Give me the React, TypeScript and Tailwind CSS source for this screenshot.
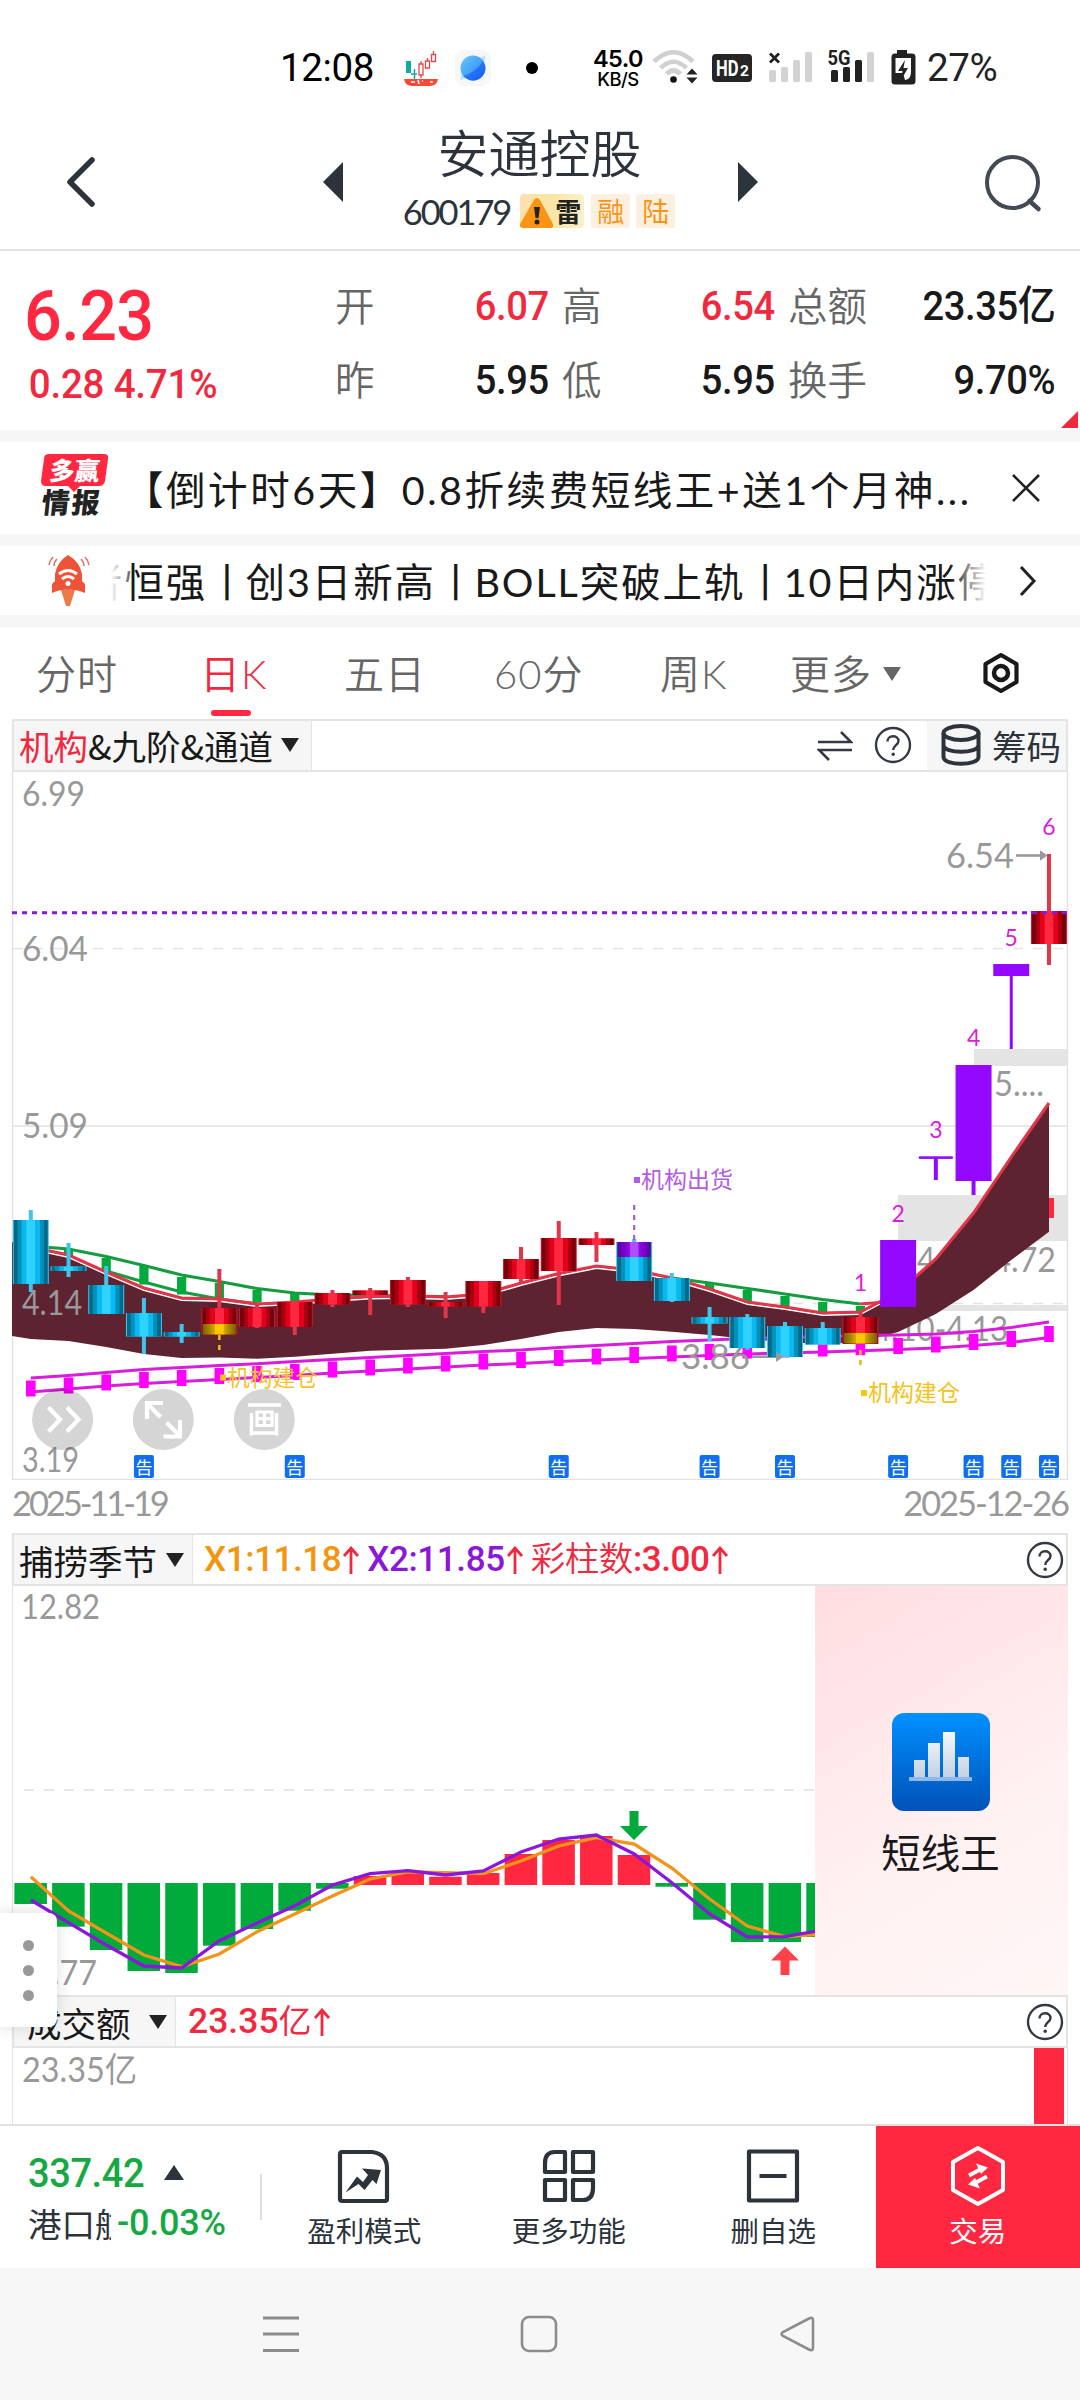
import React from "react";

const STEP = 37.71;
const cx = (i: number) => 30.8 + i * STEP;

const num = "font-['Roboto','Noto_Sans_CJK_SC',sans-serif]";
const light = "Lato, 'Noto Sans CJK SC', sans-serif";

type Candle = { i: number; k: "b" | "r"; h: number; t: number; b: number; l: number };

const candles: Candle[] = [
  { i: 0, k: "b", h: 1210, t: 1220, b: 1284, l: 1292 },
  { i: 1, k: "b", h: 1243, t: 1266.5, b: 1271, l: 1277 },
  { i: 2, k: "b", h: 1266, t: 1285, b: 1314, l: 1314 },
  { i: 3, k: "b", h: 1298, t: 1313, b: 1336.5, l: 1354 },
  { i: 4, k: "b", h: 1324, t: 1332, b: 1336.5, l: 1343 },
  { i: 5, k: "r", h: 1269, t: 1308, b: 1334.5, l: 1334 },
  { i: 6, k: "r", h: 1304, t: 1308, b: 1327, l: 1328 },
  { i: 7, k: "r", h: 1302, t: 1302, b: 1327, l: 1335 },
  { i: 8, k: "r", h: 1290, t: 1293, b: 1304.5, l: 1307 },
  { i: 9, k: "r", h: 1288, t: 1290.5, b: 1295, l: 1315 },
  { i: 10, k: "r", h: 1277, t: 1280, b: 1304.5, l: 1307 },
  { i: 11, k: "r", h: 1292, t: 1302, b: 1306.5, l: 1318 },
  { i: 12, k: "r", h: 1281, t: 1281, b: 1306.5, l: 1313 },
  { i: 13, k: "r", h: 1247, t: 1259, b: 1279, l: 1283 },
  { i: 14, k: "r", h: 1221, t: 1238, b: 1271, l: 1305 },
  { i: 15, k: "r", h: 1232, t: 1238.5, b: 1245, l: 1262 },
  { i: 16, k: "b", h: 1239, t: 1242, b: 1281, l: 1281 },
  { i: 17, k: "b", h: 1273, t: 1278, b: 1301, l: 1302 },
  { i: 18, k: "b", h: 1307, t: 1317, b: 1323.5, l: 1341 },
  { i: 19, k: "b", h: 1314, t: 1317, b: 1348, l: 1350 },
  { i: 20, k: "b", h: 1322, t: 1326, b: 1357, l: 1357 },
  { i: 21, k: "b", h: 1322, t: 1328, b: 1344.5, l: 1345 },
  { i: 22, k: "r", h: 1312, t: 1317, b: 1344, l: 1344 },
  { i: 27, k: "r", h: 854, t: 911, b: 944, l: 965 },
];

const bandTop = [
  1247, 1255, 1272, 1288, 1298, 1299, 1304, 1302, 1299, 1296.5, 1296, 1297, 1294, 1283, 1273.5, 1266,
  1270, 1278, 1289, 1302, 1307, 1313, 1312, 1292, 1259, 1213, 1157, 1103,
];
const bandBottom = [
  1339, 1341, 1347, 1354, 1358, 1357.5, 1358.7, 1356.7, 1353.7, 1350.7, 1349.7, 1348.7, 1345, 1339, 1332,
  1328, 1329, 1331.7, 1335, 1339, 1342, 1344, 1342, 1332, 1314, 1290, 1260, 1231.7,
];
const greenTop = [1246, 1249, 1256.5, 1265.5, 1275, 1281.5, 1288.5, 1293, 1295, 1295.5, 1296, 1296.5];
const greenTop2 = [1278, 1283, 1288.5, 1294, 1299.5, 1304];
const magTop = [
  1378, 1375.5, 1372.5, 1369.5, 1367.5, 1365.5, 1363.7, 1361.5, 1359.5, 1357.5, 1355.5, 1353.5, 1351.5, 1350,
  1347.5, 1345.5, 1343.5, 1341.5, 1340, 1338.5, 1337.5, 1336.5, 1335.5, 1335, 1334, 1331.5, 1327.5, 1322,
];
const magBottom = [
  1392, 1389, 1386, 1383.5, 1381.5, 1379.5, 1377.5, 1375.5, 1373, 1371, 1369, 1367, 1365, 1363.5, 1361.5,
  1360, 1358.5, 1357, 1355.5, 1354, 1353, 1352, 1350.7, 1349.5, 1348, 1345.5, 1342.5, 1337.5,
];
const line = (ys: number[], from = 0, dy = 0) =>
  ys.map((y, n) => `${cx(n + from).toFixed(1)},${y + dy}`).join(" ");

const greenRungs: [number, number, number][] = [
  [1, 1250, 1256], [2, 1258, 1272], [3, 1266, 1284.5], [4, 1277, 1294.5], [5, 1283, 1300], [6, 1290, 1302.5],
  [7, 1294, 1302], [18, 1284, 1290], [19, 1290, 1302], [20, 1296, 1306], [21, 1302, 1312], [22, 1306, 1313],
];

function Label({ x, y, w, children, size = 34.5, color = "#999", weight = 400 }: {
  x: number; y: number; w: number; children: string; size?: number; color?: string; weight?: number;
}) {
  return (
    <text x={x} y={y} textLength={w} lengthAdjust="spacingAndGlyphs" fontFamily={light} fontSize={size} fontWeight={weight} fill={color}>
      {children}
    </text>
  );
}

function MainChart() {
  const notices = [3, 7, 14, 18, 20, 23, 25, 26, 27];
  return (
    <svg width="1080" height="708" viewBox="0 772 1080 708" className="block">
      <defs>
        <linearGradient id="blue">
          <stop offset="0" stopColor="#006a8c" /><stop offset=".1" stopColor="#006a8c" />
          <stop offset=".12" stopColor="#0090b8" /><stop offset=".22" stopColor="#0090b8" />
          <stop offset=".24" stopColor="#08b8ee" /><stop offset=".36" stopColor="#08b8ee" />
          <stop offset=".38" stopColor="#2fd2ff" /><stop offset=".62" stopColor="#2fd2ff" />
          <stop offset=".64" stopColor="#08b8ee" /><stop offset=".76" stopColor="#08b8ee" />
          <stop offset=".78" stopColor="#0090b8" /><stop offset=".88" stopColor="#0090b8" />
          <stop offset=".9" stopColor="#006a8c" /><stop offset="1" stopColor="#006a8c" />
        </linearGradient>
        <linearGradient id="red">
          <stop offset="0" stopColor="#780009" /><stop offset=".1" stopColor="#780009" />
          <stop offset=".12" stopColor="#a80010" /><stop offset=".22" stopColor="#a80010" />
          <stop offset=".24" stopColor="#e3001b" /><stop offset=".36" stopColor="#e3001b" />
          <stop offset=".38" stopColor="#ff2840" /><stop offset=".62" stopColor="#ff2840" />
          <stop offset=".64" stopColor="#e3001b" /><stop offset=".76" stopColor="#e3001b" />
          <stop offset=".78" stopColor="#a80010" /><stop offset=".88" stopColor="#a80010" />
          <stop offset=".9" stopColor="#780009" /><stop offset="1" stopColor="#780009" />
        </linearGradient>
        <linearGradient id="gold">
          <stop offset="0" stopColor="#7d6300" /><stop offset=".2" stopColor="#a88500" />
          <stop offset=".36" stopColor="#d9aa00" /><stop offset=".38" stopColor="#ffc800" />
          <stop offset=".62" stopColor="#ffc800" /><stop offset=".64" stopColor="#d9aa00" />
          <stop offset=".8" stopColor="#a88500" /><stop offset="1" stopColor="#7d6300" />
        </linearGradient>
        <linearGradient id="violet">
          <stop offset="0" stopColor="#5a009c" /><stop offset=".2" stopColor="#7a00cc" />
          <stop offset=".36" stopColor="#8d10e0" /><stop offset=".38" stopColor="#b24dff" />
          <stop offset=".62" stopColor="#b24dff" /><stop offset=".64" stopColor="#8d10e0" />
          <stop offset=".8" stopColor="#7a00cc" /><stop offset="1" stopColor="#5a009c" />
        </linearGradient>
      </defs>

      <path d="M12.5 772V1479.5H1067.5V772" fill="none" stroke="#e2e2e2" strokeWidth="1.5" />
      <path d="M13 948.5H1067M13 1303.5H1067" stroke="#e3e3e3" strokeWidth="1.5" strokeDasharray="10 10" />
      <path d="M13 1126H1067" stroke="#e8e8e8" strokeWidth="2" />
      <rect x="974" y="1049" width="93" height="17" fill="#e4e4e4" />
      <rect x="898" y="1195" width="169" height="46" fill="#e4e4e4" />
      <rect x="898" y="1305" width="169" height="6" fill="#e4e4e4" />
      <Label x={994} y={1096} w={50}>5....</Label>
      <Label x={917} y={1272} w={139}>4.59-4.72</Label>
      <Label x={873} y={1341} w={135}>4.10-4.13</Label>
      <rect x="1044" y="1198" width="10" height="20" fill="#ff2840" />

      {/* channel band */}
      <polygon
        points={`12,1242 ${line(bandTop)} ${bandBottom.map((y, n) => `${cx(n).toFixed(1)},${y}`).reverse().join(" ")} 12,1336`}
        fill="#5e2331"
      />
      <polyline points={line(greenTop)} fill="none" stroke="#169b41" strokeWidth="3.2" />
      <polyline points={line(greenTop2, 17)} fill="none" stroke="#169b41" strokeWidth="3.2" />
      <polyline points={line([1271, 1282, 1292, 1299, 1304], 2)} fill="none" stroke="#169b41" strokeWidth="3" />
      {greenRungs.map(([i, a, b]) => (
        <rect key={i} x={cx(i) - 4.6} y={a} width="9.2" height={b - a} fill="#00aa3b" />
      ))}
      <polyline points={line(bandTop.slice(0, 24), 0, 2.2)} fill="none" stroke="#fff" strokeWidth="1.8" />
      <polyline points={line(bandTop)} fill="none" stroke="#e0354a" strokeWidth="3.1" />
      <polyline points={line([1304, 1301], 22)} fill="none" stroke="#e0354a" strokeWidth="2.8" />

      {/* magenta ladder */}
      <polyline points={line(magTop)} fill="none" stroke="#d81edb" strokeWidth="3" />
      <polyline points={line(magBottom)} fill="none" stroke="#d81edb" strokeWidth="3" />
      {magBottom.map((y, n) => (
        <rect key={n} x={cx(n) - 4.8} y={y - 11.5} width="9.6" height="16" fill="#ff00ff" />
      ))}

      <Label x={22} y={806} w={63}>6.99</Label>
      <Label x={22} y={961} w={66}>6.04</Label>
      <Label x={22} y={1138} w={66}>5.09</Label>
      <Label x={22} y={1315} w={60}>4.14</Label>
      <Label x={22} y={1472} w={57}>3.19</Label>
      <Label x={681} y={1369} w={69}>3.86</Label>
      <path d="M752 1356.7h25" stroke="#999" strokeWidth="2.6" />

      {candles.map((c) => (
        <g key={c.i}>
          <rect x={cx(c.i) - 2} y={c.h} width="4" height={c.l - c.h} fill={c.k === "b" ? "#3fc4ee" : "#e0354a"} />
          <rect x={cx(c.i) - 18} y={c.t} width="36" height={c.b - c.t} fill={c.k === "b" ? "#3fc4ee" : "#c81b30"} />
          <rect x={cx(c.i) - 17} y={c.t} width="34" height={c.b - c.t} fill={c.k === "b" ? "url(#blue)" : "url(#red)"} />
        </g>
      ))}
      <path d="M776 1351.500l7.500 5.200l-7.500 5.200z" fill="#999" />
      <Label x={946} y={868} w={68}>6.54</Label>
      <path d="M1016 855.5h25" stroke="#999" strokeWidth="2.6" />
      <path d="M1040 850.300l7.500 5.200l-7.500 5.200z" fill="#999" />
      <rect x={cx(5) - 16.5} y="1324" width="33" height="10.5" fill="url(#gold)" />
      <rect x={cx(22) - 16.5} y="1333" width="33" height="10.5" fill="url(#gold)" />
      <rect x={cx(16) - 16.5} y="1242" width="33" height="15" fill="url(#violet)" />
      <path d={`M${cx(5)} 1335v16`} stroke="#e8b820" strokeWidth="2.6" strokeDasharray="5 5" />
      <path d={`M${cx(22)} 1350v17`} stroke="#e8b820" strokeWidth="2.6" strokeDasharray="5 5" />
      <path d={`M${cx(16)} 1205v35`} stroke="#a75bd6" strokeWidth="2.2" strokeDasharray="5 5" />

      <g fill="#9408ff">
        <rect x={cx(23) - 18} y="1240" width="36" height="67" />
        <rect x={cx(24) - 17} y="1156.3" width="34" height="2.6" />
        <rect x={cx(24) - 2} y="1158" width="4" height="22" />
        <rect x={cx(25) - 18} y="1065" width="36" height="116" />
        <rect x={cx(25) - 2} y="1181" width="4" height="14" />
        <rect x={cx(26) - 18} y="964" width="36" height="12" />
        <rect x={cx(26) - 1.5} y="976" width="3" height="73" />
      </g>
      <path d="M12 912.7H1067" stroke="#8a17d9" strokeWidth="3" strokeDasharray="5 5" />

      {[[22, 1291, "1"], [23, 1222, "2"], [24, 1138, "3"], [25, 1046, "4"], [26, 946, "5"], [27, 835, "6"]].map(([i, y, s]) => (
        <text key={s} x={cx(i as number)} y={y} textAnchor="middle" fontFamily={light} fontSize="23" fill="#d61fdb">{s}</text>
      ))}

      <rect x="634" y="1177" width="6" height="6" fill="#b25be3" />
      <Label x={641} y={1188} w={92} size={23} color="#b25be3">机构出货</Label>
      <rect x="220" y="1374.500" width="6" height="6" fill="#fbc50c" />
      <Label x={227} y={1385.5} w={91} size={23} color="#f3c32a">机构建仓</Label>
      <rect x="861" y="1390" width="6" height="6" fill="#fbc50c" />
      <Label x={868} y={1401} w={92} size={23} color="#f5c21a">机构建仓</Label>

      {[62.6, 163.3, 264.3].map((x) => (
        <circle key={x} cx={x} cy="1419.500" r="30.500" fill="#000" fillOpacity=".165" />
      ))}
      <g fill="none" stroke="#fff" strokeWidth="4.200">
        <path d="M48.500 1407.500l11.500 12l-11.500 12M67 1407.500l11.500 12l-11.500 12" />
        <path d="M147 1419v-16h16M148 1404.500l12.500 12.500M180 1420v16.500h-16.500M179 1435l-12.500-12.500" />
        <path d="M248 1405h33M251.500 1413v22.500M276.500 1413v22.500M251 1433h26" strokeWidth="3.600" />
        <path d="M257 1412h15v13.500h-15zM264.500 1412v13.500M257 1418.700h15" strokeWidth="3.200" />
      </g>

      {notices.map((i) => (
        <g key={i}>
          <rect x={cx(i) - 10} y="1455" width="20" height="23" rx="2" fill="#0f6ff0" />
          <text x={cx(i)} y="1473.500" textAnchor="middle" fontFamily={light} fontSize="17" fill="#fff">告</text>
        </g>
      ))}
    </svg>
  );
}

const bars = [
  1904, 1926.7, 1950, 1971, 1973, 1945.7, 1929, 1910.7, 1888.7, 1876, 1873, 1876.7, 1873, 1854, 1840, 1836,
  1855, 1886.7, 1919.7, 1942, 1942, 1937,
];
const orange = [
  1876.7, 1911, 1933, 1955, 1966.7, 1954, 1931.7, 1914, 1896, 1879, 1872, 1872.7, 1873.7, 1861, 1846, 1837.7,
  1844, 1868, 1899, 1926, 1936.7, 1934,
];
const purple = [
  1900, 1922.7, 1945, 1966, 1968, 1940.7, 1923, 1905.7, 1885, 1873.7, 1870.7, 1875, 1871, 1852, 1839, 1835,
  1854, 1882.7, 1914, 1937, 1936.7, 1930,
];

function SeasonChart() {
  return (
    <svg width="802" height="409" viewBox="13 1586 802 409" className="block">
      <path d="M24 1790H815" stroke="#e6e6e6" strokeWidth="2" strokeDasharray="10 10" />
      <Label x={21} y={1619} w={79}>12.82</Label>
      <Label x={21} y={1985} w={76}>-4.77</Label>
      {bars.map((y, i) => {
        const up = i >= 9 && i <= 16;
        return (
          <rect key={i} x={cx(i) - 16.4} y={up ? y : 1883} width="32.500" height={up ? 1885 - y : y - 1883} fill={up ? "#ff2840" : "#00aa3b"} />
        );
      })}
      <polyline points={line(orange)} fill="none" stroke="#f0941a" strokeWidth="3.300" />
      <polyline points={line(purple)} fill="none" stroke="#8a17d9" strokeWidth="3.300" />
      <path d="M629.500 1811h9v15h9.500l-14 14l-14-14h9.500z" fill="#00aa3b" />
      <path d="M780.500 1975h9v-14.500h9.500l-14-14l-14 14h9.500z" fill="#ff4248" />
    </svg>
  );
}

const Down = ({ c = "text-[#222]" }: { c?: string }) => (
  <svg width="18" height="14" viewBox="0 0 18 14" className={c}><path d="M0 0h18L9 14z" fill="currentColor" /></svg>
);
const UpArrow = () => (
  <svg width="16" height="28" viewBox="0 0 16 28" className="ml-[2px]">
    <path d="M8 28V3M1 10l7-8l7 8" fill="none" stroke="#f0293f" strokeWidth="2.800" />
  </svg>
);
const Help = () => (
  <svg width="38" height="38" viewBox="0 0 38 38">
    <circle cx="19" cy="19" r="17" fill="none" stroke="#333a45" strokeWidth="2.400" />
    <path d="M13.500 15.500c0-7 11-7 11-.5c0 4-5.300 4.500-5.300 9" fill="none" stroke="#333a45" strokeWidth="2.400" />
    <circle cx="19.200" cy="28.300" r="1.700" fill="#333a45" />
  </svg>
);

function StatusBar() {
  return (
    <div className="flex h-[115px] items-start pt-[44px] pl-[280px] text-black">
      <div className={`${num} w-[124px] text-[38.5px] leading-[48px] tracking-[-0.4px]`}>12:08</div>
      <svg width="34" height="36" viewBox="404 50 34 36" className="mt-[6px]">
        <path d="M406 61h5v12h-5z" fill="#15a9a6" /><path d="M414.500 69v11M411 74h6" stroke="#15a9a6" strokeWidth="1.500" />
        <g fill="none" stroke="#e24a4a" strokeWidth="1.300">
          <path d="M419 64h4v11h-4zM421 61v3M421 75v3M425.500 61h4v7h-4zM427.500 58v3M431.500 54.500h4v7h-4zM433.500 51v3" />
        </g>
        <path d="M404 79h34q-1 7-8 7h-18q-7 0-8-7z" fill="#fb4a34" />
        <path d="M411 82h4M418 80l1 4M422 81h1M430 82h3" stroke="#fff" strokeWidth="1.500" />
      </svg>
      <svg width="36" height="36" viewBox="0 0 36 36" className="mt-[6px] ml-[17px]">
        <defs>
          <linearGradient id="globe" x1="0" y1="0" x2="1" y2="1">
            <stop offset="0" stopColor="#69c8ff" /><stop offset=".5" stopColor="#46a4fa" /><stop offset="1" stopColor="#1457f2" />
          </linearGradient>
        </defs>
        <rect width="36" height="36" rx="9" fill="#f6f7f9" />
        <path d="M30 5.500L22 10l5 5q4-6 3-9.500zM5.500 30L14 27l-6-6q-3 6-2.500 9z" fill="#b5e4ff" />
        <circle cx="18" cy="18" r="12.500" fill="url(#globe)" />
        <path d="M8 26Q22 22 28 11q5 9-1 16q-9 8-19-1z" fill="#145cf2" opacity=".6" />
      </svg>
      <div className="mt-[18px] ml-[35px] h-[12px] w-[12px] rounded-full bg-black" />
      <div className="mt-[3px] ml-[52px] flex w-[56px] flex-col items-center font-['Inter'] font-semibold">
        <div className="text-[23.5px] leading-[23px] tracking-[-0.5px]">45.0</div>
        <div className="text-[18.5px] leading-[19px] font-medium tracking-[-0.5px]">KB/S</div>
      </div>
      <svg width="266" height="40" viewBox="650 48 266 40" className="mt-[4px] ml-[4px]">
        <g fill="none" stroke="#d0d0d0" strokeWidth="4.500">
          <path d="M654 61.500q19.500-18.500 39 0M660.500 68q13-12.500 26 0M666.500 74q7-7 14 0" />
        </g>
        <circle cx="673.500" cy="79.500" r="3.300" fill="#111" />
        <path d="M686.500 74.500l5.500-6l5.500 6zM686.500 77.500l5.500 6l5.500-6z" fill="#222" />
        <rect x="712" y="54" width="40" height="28" rx="4" fill="#252525" />
        <text x="716" y="76" fontFamily="Roboto" fontWeight="700" fontSize="22" textLength="22.500" lengthAdjust="spacingAndGlyphs" fill="#fff">HD</text>
        <text x="740" y="76" fontFamily="Roboto" fontWeight="700" fontSize="15.500" fill="#fff">2</text>
        <path d="M770 53.500l9 9M779 53.500l-9 9" stroke="#222" strokeWidth="2.800" />
        <g fill="#d3d3d3">
          <rect x="769" y="70" width="7" height="12" rx="1.500" /><rect x="781" y="67" width="7" height="15" rx="1.500" />
          <rect x="793" y="60" width="7" height="22" rx="1.500" /><rect x="805" y="52" width="7" height="30" rx="1.500" />
          <rect x="867" y="52" width="7" height="30" rx="1.500" />
        </g>
        <g fill="#222">
          <rect x="831" y="70" width="7" height="12" rx="1.500" /><rect x="843" y="67" width="7" height="15" rx="1.500" />
          <rect x="855" y="60" width="7" height="22" rx="1.500" />
        </g>
        <text x="827.500" y="65" fontFamily="Roboto" fontWeight="700" fontSize="20.500" textLength="23" lengthAdjust="spacingAndGlyphs" fill="#222">5G</text>
        <path d="M897 50h10v3.500h5q3.500 0 3.500 3.500v24q0 3.500-3.500 3.500h-17q-3.500 0-3.500-3.500v-24q0-3.500 3.500-3.500h2z" fill="#222" />
        <path d="M895.500 58h15.500v14q0 7-6 8l-2-7h-7.500z" fill="#fff" />
        <path d="M905 60l-7 11h4.500l-1.500 9l7-12h-4.500z" fill="#222" />
      </svg>
      <div className={`${num} ml-[11px] text-[38.5px] leading-[48px] tracking-[-0.4px] text-[#222]`}>27%</div>
    </div>
  );
}

function TitleBar() {
  return (
    <div className="flex h-[136px] items-start border-b-2 border-[#e4e4e4] text-[#2c333b]">
      <svg width="34" height="54" viewBox="0 0 34 54" className="mt-[40px] ml-[63px]">
        <path d="M29 5L7 27l22 22" fill="none" stroke="currentColor" strokeWidth="5.500" strokeLinecap="round" strokeLinejoin="round" />
      </svg>
      <svg width="20" height="40" viewBox="0 0 20 40" className="mt-[47px] ml-[226px]"><path d="M20 0v40L0 20z" fill="currentColor" /></svg>
      <div className="flex w-[395px] flex-col items-center">
        <div className="mt-[4px] -ml-[2px] font-['Noto_Sans_CJK_SC'] text-[51px] leading-[64px] font-[350]">安通控股</div>
        <div className="mt-[11px] flex h-[34px] items-center pr-[3px]">
          <span className="mr-[10px] pt-[2px] font-[Lato] text-[34.5px] leading-[34px] tracking-[-2.1px]">600179</span>
          <div className="mr-[7px] flex h-[34px] w-[64px] items-center rounded-[4px] bg-[linear-gradient(90deg,#ffe0b0,#f9e5a4_50%,#fdf0c8)] font-['Noto_Sans_CJK_SC'] text-[26px] font-bold text-[#222]">
            <svg width="36" height="34" viewBox="0 0 36 34">
              <path d="M0 30L14 6q3-4 6 0l13 24q1 4-3 4H3q-4 0-3-4z" fill="#fb9413" />
              <path d="M14 13h6l-1.500 11h-3z" fill="#222" /><circle cx="17" cy="28" r="2.500" fill="#222" />
            </svg>
            <span className="-ml-px leading-[34px]">雷</span>
          </div>
          <div className="mr-[6px] h-[34px] w-[39px] rounded-[2px] bg-[#fdf0e1] text-center font-['Noto_Sans_CJK_SC'] text-[27px] leading-[33px] text-[#fb9413]">融</div>
          <div className="h-[34px] w-[39px] rounded-[2px] bg-[#fdf0e1] text-center font-['Noto_Sans_CJK_SC'] text-[27px] leading-[33px] text-[#fb9413]">陆</div>
        </div>
      </div>
      <svg width="20" height="40" viewBox="0 0 20 40" className="mt-[47px]"><path d="M0 0v40L20 20z" fill="currentColor" /></svg>
      <svg width="62" height="62" viewBox="0 0 62 62" className="mt-[37px] ml-[225px] text-[#444a54]">
        <circle cx="29.500" cy="30.500" r="25.500" fill="none" stroke="currentColor" strokeWidth="4" />
        <path d="M46.500 49l9 8" stroke="currentColor" strokeWidth="4.500" strokeLinecap="round" />
      </svg>
    </div>
  );
}

function Quote() {
  const cells: [string, string, string][] = [
    ["开", "6.07", "text-[#f0293f]"], ["高", "6.54", "text-[#f0293f]"], ["总额", "23.35亿", "text-[#191919]"],
    ["昨", "5.95", "text-[#191919]"], ["低", "5.95", "text-[#191919]"], ["换手", "9.70%", "text-[#191919]"],
  ];
  return (
    <div className="relative flex h-[179px]">
      <div className={`${num} w-[335px] pl-[24px] font-medium text-[#f0293f]`}>
        <div className="mt-[23px] origin-left scale-x-[0.95] text-[70px] leading-[84px] tracking-[-0.6px] text-[#ff2840]">6.23</div>
        <div className="mt-[8px] origin-left scale-x-[0.95] pl-[5px] text-[40.5px] leading-[36px] tracking-[-0.2px]">0.28 4.71%</div>
      </div>
      <div className="mt-[17px] grid h-[148px] grid-cols-[214px_213px_267px] grid-rows-2 gap-x-[13px]">
        {cells.map(([k, v, c]) => (
          <div key={k} className="flex items-center justify-between">
            <span className="-mt-[3px] font-['Noto_Sans_CJK_SC'] text-[39.5px] leading-[50px] font-[350] text-[#666]">{k}</span>
            <span className={`${num} mt-[2px] origin-right scale-x-[0.94] text-[40.5px] leading-[50px] font-medium tracking-[-0.4px] ${c}`}>{v}</span>
          </div>
        ))}
      </div>
      <svg width="17" height="17" viewBox="0 0 17 17" className="absolute top-[160px] left-[1061px]"><path d="M17 0v17H0z" fill="#f0293f" /></svg>
    </div>
  );
}

function News() {
  return (
    <div className="flex h-[92px] items-center bg-white pl-[41px]">
      <div className="relative flex h-[68px] w-[68px] flex-col items-center">
        <svg width="68" height="40" viewBox="0 0 68 40" className="absolute top-0 left-0">
          <path d="M8 0h55q5 0 4 5l-3 22q-1 5-6 5H39l-6 6l-6-6H5q-5 0-5-5l3-22q0-5 5-5z" fill="#ff2840" />
        </svg>
        <span className="relative -skew-x-6 font-['Noto_Sans_CJK_SC'] text-[25px] leading-[30px] font-black text-white">多赢</span>
        <span className="relative mt-[5px] -ml-[6px] -skew-x-6 font-['Noto_Sans_CJK_SC'] text-[28px] leading-[24px] font-black tracking-[2px] text-[#222]">情报</span>
      </div>
      <div className="mt-[4px] ml-[15px] w-[875px] font-['Lato','Noto_Sans_CJK_SC',sans-serif] text-[39.5px] leading-[50px] font-normal tracking-[2.55px] whitespace-nowrap text-[#191919]">
        【倒计时6天】0.8折续费短线王+送1个月神...
      </div>
      <svg width="30" height="30" viewBox="0 0 30 30" className="ml-[12px]"><path d="M2 2l26 26M28 2L2 28" stroke="#222" strokeWidth="2.600" /></svg>
    </div>
  );
}

function Ticker() {
  const tags = ["者恒强", "创3日新高", "BOLL突破上轨", "10日内涨停"];
  return (
    <div className="flex h-[69px] items-center pl-[47px]">
      <svg width="44" height="52" viewBox="48 555 44 52">
        <g fill="none" stroke="#e0705c" strokeWidth="1.500">
          <path d="M50 565q1-5 4-8M55 566q0-4 3-7M90 565q-1-5-4-8M85 566q0-4-3-7" />
        </g>
        <path d="M62 590h14l-5 16h-4z" fill="#ee7a4b" />
        <path d="M69 555q12 7 14 19v7l3 3v9q-10-4-17-3q-7-1-16 3v-9l3-3v-7q2-12 13-19z" fill="#ee5238" />
        <path d="M60 574q9-7 18 0M63 579q6-5 12 0" fill="none" stroke="#fff" strokeWidth="3" /><circle cx="69" cy="583.500" r="2.500" fill="#fff" />
      </svg>
      <div className="relative ml-[20px] flex w-[875px] overflow-hidden">
        <div className="mt-[2px] -ml-[28px] font-['Lato','Noto_Sans_CJK_SC',sans-serif] text-[39.5px] leading-[50px] tracking-[1.9px] whitespace-nowrap text-[#191919]">
          {tags.map((t, n) => (
            <React.Fragment key={t}>
              {n > 0 && <span className="-mr-[3px]">丨</span>}
              {t}
            </React.Fragment>
          ))}
        </div>
        <div className="absolute inset-y-0 left-0 w-[20px] bg-linear-to-r from-white to-white/30" />
        <div className="absolute inset-y-0 right-0 w-[36px] bg-linear-to-l from-white to-white/0" />
      </div>
      <svg width="20" height="34" viewBox="0 0 20 34" className="ml-[32px]"><path d="M3 3l13 14L3 31" fill="none" stroke="#222" strokeWidth="3" /></svg>
    </div>
  );
}

function Tabs() {
  const t = "font-['Lato','Noto_Sans_CJK_SC',sans-serif] text-[40px] leading-[50px] tracking-[1px] whitespace-nowrap font-[350]";
  return (
    <div className="flex h-[92px] items-start pt-[22px] pl-[36px] text-[#666]">
      <div className={`${t} w-[164px]`}>分时</div>
      <div className="w-[144px] text-[#f0293f]">
        <div className={t}>日K</div>
        <div className="mt-[11px] ml-[11px] h-[6px] w-[40px] rounded-[3px] bg-[#ff2840]" />
      </div>
      <div className={`${t} w-[150px]`}>五日</div>
      <div className={`${t} w-[166px]`}>60分</div>
      <div className={`${t} w-[130px]`}>周K</div>
      <div className={`${t} w-[93px]`}>更多</div>
      <div className="pt-[18px]"><Down c="text-[#666]" /></div>
      <svg width="38" height="42" viewBox="0 0 38 42" className="mt-[3px] ml-[81px]">
        <path d="M19 3l15.500 9v18L19 39L3.500 30V12z" fill="none" stroke="#191919" strokeWidth="4.200" strokeLinejoin="round" />
        <circle cx="19" cy="21" r="7" fill="none" stroke="#191919" strokeWidth="4.500" />
      </svg>
    </div>
  );
}

const hdr = "font-['Noto_Sans_CJK_SC'] text-[34.5px] leading-[46px] whitespace-nowrap";

function BottomBar() {
  const item = "flex w-[204.500px] flex-col items-center pt-[20px] font-['Noto_Sans_CJK_SC'] text-[28.5px] leading-[36px] text-[#2c333b]";
  return (
    <div className="flex h-[144px] border-t-2 border-[#e2e2e2] bg-white">
      <div className="flex w-[262px] items-center justify-between">
        <div className={`${num} pl-[28px] font-medium text-[#16a842]`}>
          <div className="flex items-center text-[41px] leading-[44px] tracking-[-0.5px]">
            <span className="block w-[136px] origin-left scale-x-[0.93] pt-[2px]">337.42</span>
            <svg width="20" height="15" viewBox="0 0 20 15"><path d="M10 0l10 15H0z" fill="#2c333b" /></svg>
          </div>
          <div className="mt-[6px] flex items-center">
            <span className="block w-[83px] overflow-hidden font-['Noto_Sans_CJK_SC'] text-[33.5px] leading-[44px] font-normal whitespace-nowrap text-[#2c333b]">港口航运</span>
            <span className="ml-[6px] text-[36px] leading-[36px] tracking-[-0.2px]">-0.03%</span>
          </div>
        </div>
        <div className="h-[46px] w-[2px] bg-[#dedede]" />
      </div>
      <div className={item}>
        <svg width="54" height="60" viewBox="0 0 54 60">
          <path d="M5 6h30q15 2 15 16v31q0 2-2 2H5q-2 0-2-2V8q0-2 2-2z" fill="none" stroke="#2c333b" strokeWidth="4.200" />
          <path d="M25 22.500L44 24L39.500 38L35.500 34L27.500 44L21.500 38L8.500 46.500L20 30.500L26 36L31 29z" fill="#2c333b" />
        </svg>
        <span className="mt-[6px]">盈利模式</span>
      </div>
      <div className={item}>
        <svg width="54" height="60" viewBox="0 0 54 60" fill="none" stroke="#2c333b" strokeWidth="4.200" strokeLinejoin="round">
          <path d="M23 6H13Q3 6 3 17v9h20zM31 6h20v20H31zM3 34h20v20H3zM31 34h20v8q0 12-10 12H31z" />
        </svg>
        <span className="mt-[6px]">更多功能</span>
      </div>
      <div className={item}>
        <svg width="54" height="60" viewBox="0 0 54 60" fill="none" stroke="#2c333b" strokeWidth="4.200" strokeLinejoin="round">
          <path d="M3 5.500h48v49H3zM13.500 30h27" />
        </svg>
        <span className="mt-[6px]">删自选</span>
      </div>
      <div className="flex flex-1 flex-col items-center bg-[#ff2840] pt-[19px] font-['Noto_Sans_CJK_SC'] text-[28.5px] leading-[36px] text-white">
        <svg width="58" height="62" viewBox="0 0 58 62" fill="none" stroke="#fff">
          <path d="M29 3l25 14v28L29 59L4 45V17z" strokeWidth="4" strokeLinejoin="round" />
          <path d="M20 30.500L33 23.500M38 31.500L25 38.500" strokeWidth="3.800" />
          <path d="M27 18.500L39 22.500L32 29zM31 43.500L19 39.500L26 33z" fill="#fff" stroke="none" />
        </svg>
        <span className="mt-[5px]">交易</span>
      </div>
    </div>
  );
}

export default function App() {
  return (
    <div className="h-[2400px] w-[1080px] overflow-hidden bg-white">
      <StatusBar />
      <TitleBar />
      <Quote />
      <div className="h-[12px] bg-[#f6f6f6]" />
      <News />
      <div className="h-[12px] bg-[#f6f6f6]" />
      <Ticker />
      <div className="h-[12px] bg-[#f6f6f6]" />
      <Tabs />

      <div className="mx-[12px] flex h-[53px] items-center border-2 border-[#e4e4e4]">
        <div className={`${hdr} flex h-[49px] w-[298px] items-center border-r border-[#e4e4e4] bg-[#f6f6f6] pb-[2px] pl-[5px] text-[#191919]`}>
          <span className="text-[#f0293f]">机构</span>&amp;九阶&amp;通道
          <span className="ml-[8px]"><Down /></span>
        </div>
        <svg width="36" height="30" viewBox="0 0 36 30" className="ml-[505px]">
          <path d="M1 11h33L24 1M35 19H2l10 10" fill="none" stroke="#333a45" strokeWidth="2.600" />
        </svg>
        <div className="-mt-[2px] ml-[21px]"><Help /></div>
        <div className={`${hdr} ml-[15px] flex h-[49px] flex-1 items-center bg-[#f6f6f6] pb-[2px] pl-[14px] text-[#2c333b]`}>
          <svg width="40" height="42" viewBox="0 0 40 42" fill="none" stroke="#2c333b" strokeWidth="4">
            <ellipse cx="20" cy="9" rx="17.500" ry="7" />
            <path d="M2.500 9v24c0 9 35 9 35 0V9M2.500 21c0 9 35 9 35 0" />
          </svg>
          <span className="ml-[11px]">筹码</span>
        </div>
      </div>
      <MainChart />
      <div className="flex h-[53px] justify-between px-[12px] pt-[1px] font-[Lato] text-[34.5px] leading-[44px] text-[#999]">
        <span className="tracking-[-3.1px]">2025-11-19</span>
        <span className="tracking-[-2.1px]">2025-12-26</span>
      </div>

      <div className="mx-[12px] flex h-[53px] items-center border-2 border-[#e4e4e4]">
        <div className={`${hdr} flex h-[49px] w-[179px] items-center border-r border-[#e4e4e4] bg-[#f6f6f6] pl-[5px] text-[#191919]`}>
          捕捞季节<span className="ml-[9px]"><Down /></span>
        </div>
        <div className={`${num} ml-[11px] flex items-center text-[35px] leading-[49px] font-medium tracking-[-0.4px]`}>
          <span className="text-[#f3960f]">X1:11.18</span><UpArrow />
          <span className="ml-[8px] text-[#8a17d9]">X2:11.85</span><UpArrow />
          <span className="ml-[8px] text-[#f0293f]"><span className="text-[34.5px] font-[350]">彩柱数</span>:3.00</span><UpArrow />
        </div>
        <div className="mr-[2px] ml-auto"><Help /></div>
      </div>
      <div className="mx-[12px] flex h-[409px] border-l border-[#e2e2e2]">
        <div className="relative w-[802px]">
          <SeasonChart />
          <div className="absolute top-[327px] -left-[14px] z-10 flex h-[114px] w-[58px] flex-col items-center justify-center gap-[14px] rounded-r-[8px] bg-white shadow-[0_0_16px_rgba(0,0,0,0.14)]">
            <i className="h-[11px] w-[11px] rounded-full bg-[#999]" />
            <i className="h-[11px] w-[11px] rounded-full bg-[#999]" />
            <i className="h-[11px] w-[11px] rounded-full bg-[#999]" />
          </div>
        </div>
        <div className="flex flex-1 flex-col items-center bg-[linear-gradient(150deg,#ffdde1,#fff1f2_60%,#fff6f6)] pt-[127px] pr-[2px]">
          <svg width="98" height="98" viewBox="0 0 98 98">
            <defs>
              <linearGradient id="app" x2="0" y2="1"><stop offset="0" stopColor="#0090ff" /><stop offset="1" stopColor="#0152b8" /></linearGradient>
              <linearGradient id="pillar" x2="0" y2="1"><stop offset="0" stopColor="#f4f9ff" /><stop offset="1" stopColor="#c3cfdf" /></linearGradient>
            </defs>
            <rect width="98" height="98" rx="12" fill="url(#app)" />
            <path d="M22 47h11v19H22zM36 30h12v36H36zM51 19h12v47H51zM66 44h11v22H66z" fill="url(#pillar)" />
            <rect x="17" y="64" width="63" height="4" fill="#8db9ec" />
          </svg>
          <div className="mt-[15px] font-['Noto_Sans_CJK_SC'] text-[39.5px] leading-[50px] text-[#191919]">短线王</div>
        </div>
      </div>
      <div className="mx-[12px] flex h-[53px] items-center border-2 border-[#e4e4e4]">
        <div className={`${hdr} flex h-[49px] w-[162px] items-center justify-between border-r border-[#e4e4e4] bg-[#f6f6f6] pr-[8px] pl-[13px] text-[#191919]`}>
          成交额<Down />
        </div>
        <div className={`${num} ml-[12px] flex items-center text-[35.5px] leading-[49px] font-medium text-[#f0293f]`}>
          <span>23.35<span className="text-[33px] font-normal">亿</span></span><UpArrow />
        </div>
        <div className="mr-[2px] ml-auto"><Help /></div>
      </div>
      <div className="mx-[12px] flex h-[76px] justify-between border-x border-[#e2e2e2] pr-[3px] pl-[9px]">
        <svg width="130" height="50" viewBox="22 2047 130 50"><Label x={22} y={2081} w={115}>23.35亿</Label></svg>
        <div className="h-[76px] w-[30px] bg-[#ff2840]" />
      </div>
      <BottomBar />
      <div className="flex h-[132px] items-center bg-[#f7f7f7] pl-[262px]">
        <svg width="38" height="40" viewBox="0 0 38 40"><path d="M1 4h36M1 20h36M1 36.500h36" stroke="#8c8c8c" strokeWidth="3" /></svg>
        <svg width="40" height="40" viewBox="0 0 40 40" className="ml-[219px]"><rect x="3" y="3" width="34" height="34" rx="7" fill="none" stroke="#8c8c8c" strokeWidth="2.600" /></svg>
        <svg width="38" height="40" viewBox="0 0 38 40" className="ml-[219px]"><path d="M31 4.500q4-2 4 2v27q0 4-4 2L5 22q-3-2 0-4z" fill="none" stroke="#8c8c8c" strokeWidth="2.600" /></svg>
      </div>
    </div>
  );
}
